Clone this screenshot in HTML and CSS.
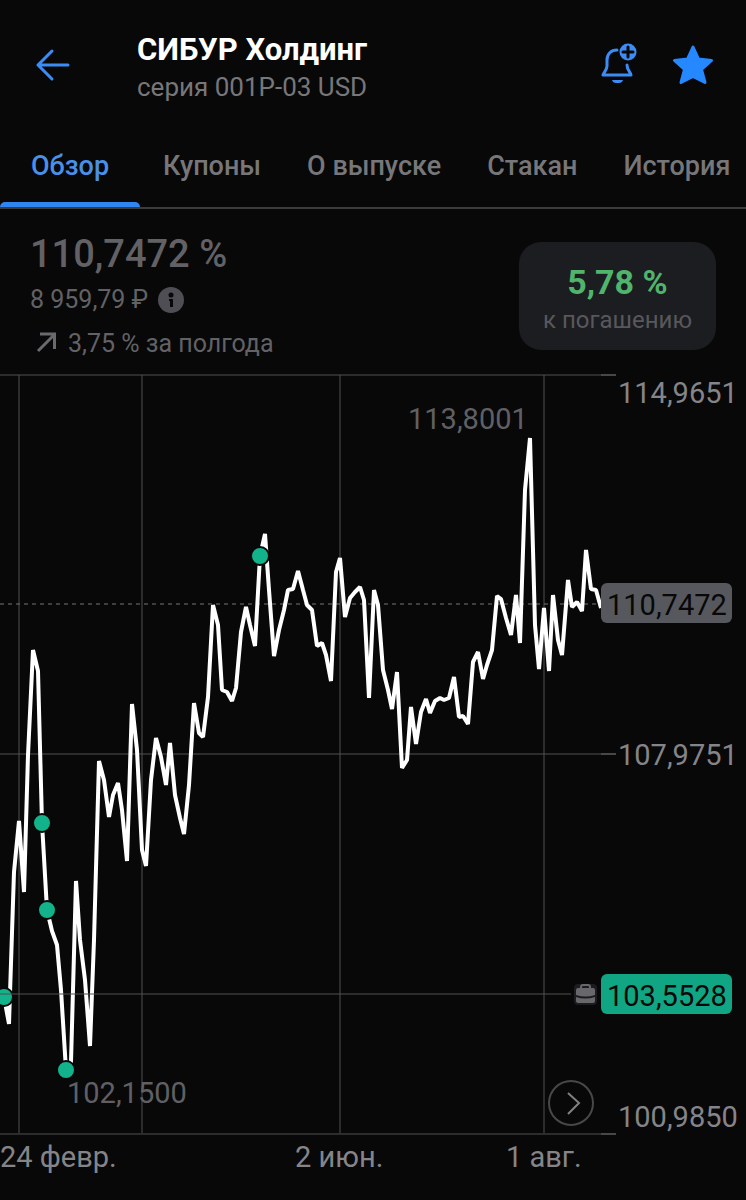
FILE: index.html
```html
<!DOCTYPE html>
<html lang="ru">
<head>
	<meta charset="UTF-8">
	<meta name="viewport" content="width=device-width, initial-scale=1">
	<title>СИБУР Холдинг</title>
	<link rel="stylesheet" href="styles.css">
</head>
<body>

<header class="header">
	<button type="button" class="icon-btn back" aria-label="Назад">
		<svg width="36" height="36" viewBox="0 0 36 36"><path d="M33 18H3M17 4L3 18l14 14"/></svg>
	</button>
	<div class="heading">
		<h1>СИБУР Холдинг</h1>
		<p>серия 001P-03 USD</p>
	</div>
	<button type="button" class="icon-btn bell" aria-label="Уведомления">
		<svg width="40" height="44" viewBox="0 0 40 44">
			<path d="M17 7C11 7 7 11 7 17v6c0 4-3 6-4 9h28c-.6-3-4-5-4-10"/>
			<path class="clapper" d="M12 37h11q-1 3-4 3h-3q-3 0-4-3z"/>
			<circle cx="28" cy="9" r="8.500"/>
			<path class="plus" d="M28 4v10M23 9h10"/>
		</svg>
	</button>
	<button type="button" class="icon-btn star" aria-label="В избранном">
		<svg width="42" height="42" viewBox="0 0 42 42"><path d="M21 3l5.500 12 13 1.500-10 9 3.500 13-12-6-12 6 3.500-13-10-9 13-1.500z"/></svg>
	</button>
</header>

<nav class="tabs">
	<a href="#" class="tab tab-selected">Обзор</a>
	<a href="#" class="tab">Купоны</a>
	<a href="#" class="tab">О выпуске</a>
	<a href="#" class="tab">Стакан</a>
	<a href="#" class="tab">История</a>
</nav>

<main>
	<section class="summary">
		<div class="quote">
			<p class="price">110,7472 %</p>
			<p class="row">8 959,79 ₽
				<svg width="26" height="26" viewBox="0 0 26 26"><circle cx="13" cy="13" r="13" fill="#4e4e54"/><circle cx="13" cy="8" r="2.500" fill="#080808"/><path d="M11 12h4v8h-3v-6h-1z" fill="#080808"/></svg>
			</p>
			<p class="row change">
				<svg width="22" height="26" viewBox="0 0 22 26"><path d="M2 20L18 4M4 3h14.500V18" fill="none" stroke="#6a6a6e" stroke-width="3"/></svg>
				3,75 % за полгода
			</p>
		</div>
		<div class="yield">
			<strong>5,78 %</strong>
			<span>к погашению</span>
		</div>
	</section>

	<section class="chart">
		<svg class="plot" viewBox="0 374 746 826" role="img" aria-label="График цены">
			<!-- сетка -->
			<path class="grid" d="M19 375V1133M142 375V1133M340 375V1133M544 375V1133"/>
			<path class="grid" d="M0 375H616M0 754H616M0 1134H616"/>
			<path class="tick" d="M601 375h15M601 754h15M601 1134h15"/>
			<path class="current" d="M0 604H602"/>
			<!-- цена -->
			<polyline class="line" points="4,997 9,1024 14,872 19,821 24,892 28,755 33,650 38,671 42,823 47,910 52,931 57,945 61,990 66,1070 71,1062 76,881 80,940 85,980 90,1046 94,940 99,761 104,780 109,817 113,795 118,783 122,810 127,861 132,704 137,750 142,850 146,866 151,780 156,738 161,757 166,785 170,743 175,795 180,818 184,834 189,785 194,703 199,733 203,737 208,697 213,605 218,625 222,690 227,692 232,701 236,688 241,632 246,607 250,625 255,646 260,556 265,534 269,590 274,656 279,630 284,610 288,590 293,589 298,571 303,590 307,605 312,610 317,646 322,643 326,655 331,681 336,572 340,558 345,617 350,598 355,592 360,587 364,600 369,698 374,590 378,605 383,670 388,690 392,709 397,672 402,768 407,760 411,707 416,744 421,712 426,699 430,713 435,701 440,698 444,700 449,698 454,677 459,717 463,716 468,724 473,662 478,652 483,679 487,665 492,650 497,596 501,599 506,618 511,635 516,595 520,643 525,490 530,438 535,625 539,669 544,608 549,671 553,595 558,640 562,655 568,580 572,607 577,602 582,611 586,550 591,589 596,590 601,608"/>
			<!-- сделки -->
			<g class="deals">
				<circle cx="4" cy="997" r="9"/>
				<circle cx="42" cy="823" r="9"/>
				<circle cx="47" cy="910" r="9"/>
				<circle cx="66" cy="1070" r="9"/>
				<circle cx="260" cy="556" r="9"/>
			</g>
			<path class="grid" d="M0 994H571"/>
			<g class="case">
				<rect x="574" y="984" width="23" height="21" rx="4" fill="#1c1c20"/>
				<path d="M581 988v-1q0-2 2-2h5q2 0 2 2v1" fill="none" stroke="#68686c" stroke-width="2"/>
				<path d="M578 988h15q2 0 2 2v5q-9 3-19 0v-5q0-2 2-2zM576 997q9 3 19 0v4q0 2-2 2h-15q-2 0-2-2z" fill="#68686c"/>
			</g>
			<text class="extreme" x="408" y="429">113,8001</text>
			<text class="extreme" x="67" y="1103">102,1500</text>
			<text class="axis" x="618" y="403">114,9651</text>
			<text class="axis" x="618" y="765">107,9751</text>
			<text class="axis" x="618" y="1127">100,9850</text>
			<rect x="601" y="583" width="131" height="40" rx="6" fill="#57585d"/>
			<text class="mark" x="607" y="615">110,7472</text>
			<rect x="601" y="974" width="131" height="40" rx="6" fill="#10a683"/>
			<text class="mark" x="607" y="1006">103,5528</text>
			<text class="axis" x="0" y="1167">24 февр.</text>
			<text class="axis" x="295" y="1167">2 июн.</text>
			<text class="axis" x="506" y="1167">1 авг.</text>
		</svg>
		<button type="button" class="next" aria-label="Дальше">
			<svg width="46" height="46" viewBox="0 0 46 46"><circle cx="23" cy="23" r="22"/><path d="M20 13l11 10-11 11"/></svg>
		</button>
	</section>
</main>

</body>
</html>
```
FILE: styles.css
```css
*{margin:0;padding:0;box-sizing:border-box;}
body{background:#080808;color:#77777a;font-family:Roboto,"Liberation Sans",sans-serif;overflow-x:hidden;}
button{background:none;border:0;cursor:pointer;}
svg{display:block;}

/* шапка */
.header{display:flex;align-items:center;gap:32px;height:124px;padding:6px 32px 0 35px;}
.heading{flex:1;padding:8px 0 0 34px;}
.heading h1{color:#fff;font-size:31px;line-height:36px;font-weight:700;}
.heading p{font-size:26px;line-height:38px;}
.icon-btn svg{fill:none;stroke:#3b8cf5;stroke-width:3;stroke-linecap:round;stroke-linejoin:round;}
.bell circle,.bell .clapper{fill:#3b8cf5;stroke:none;}
.bell .plus{stroke:#080808;}
.star svg{fill:#2688ff;stroke:#2688ff;}

/* вкладки */
.tabs{display:flex;height:85px;border-bottom:2px solid #3c3c3e;overflow:hidden;}
.tab{position:relative;flex:none;padding:23px 23px 0;color:#77777a;font-size:27px;line-height:38px;font-weight:500;text-decoration:none;}
.tab-selected{padding:23px 31px 0;color:#4a90e8;}
.tab-selected:after{content:"";position:absolute;left:0;right:0;bottom:0;height:5px;border-radius:5px 5px 0 0;background:#2f86f2;}

/* цена и доходность */
.summary{display:flex;justify-content:space-between;align-items:center;height:165px;padding:8px 30px 0;color:#626266;}
.quote{padding-top:4px;}
.price{font-size:38px;line-height:48px;font-weight:500;}
.row{display:flex;align-items:center;gap:10px;font-size:25px;line-height:44px;}
.change{padding-left:6px;}
.yield{display:flex;flex-direction:column;align-items:center;padding:20px 24px 12px;border-radius:22px;background:#1c1d21;}
.yield strong{color:#50b46c;font-size:34px;line-height:40px;font-weight:700;}
.yield span{color:#58585c;font-size:24px;line-height:36px;}

/* график */
.chart{position:relative;}
.plot{width:100%;height:auto;}
.plot text{font-size:29px;}
.grid{fill:none;stroke:#505052;stroke-width:1;}
.tick{fill:none;stroke:#48484a;stroke-width:2;}
.current{stroke:#747476;stroke-width:1;stroke-dasharray:4 4;}
.line{fill:none;stroke:#fff;stroke-width:4;stroke-linejoin:bevel;}
.deals circle{fill:#12b38b;stroke:#080808;stroke-width:2;}
.axis{fill:#858589;}
.extreme{fill:#606064;}
.mark{fill:#080808;}
.next{position:absolute;left:73.5%;top:85.5%;}
.next svg{fill:none;stroke:#48484a;stroke-width:2;}
.next path{stroke:#808084;stroke-width:2;}
```
